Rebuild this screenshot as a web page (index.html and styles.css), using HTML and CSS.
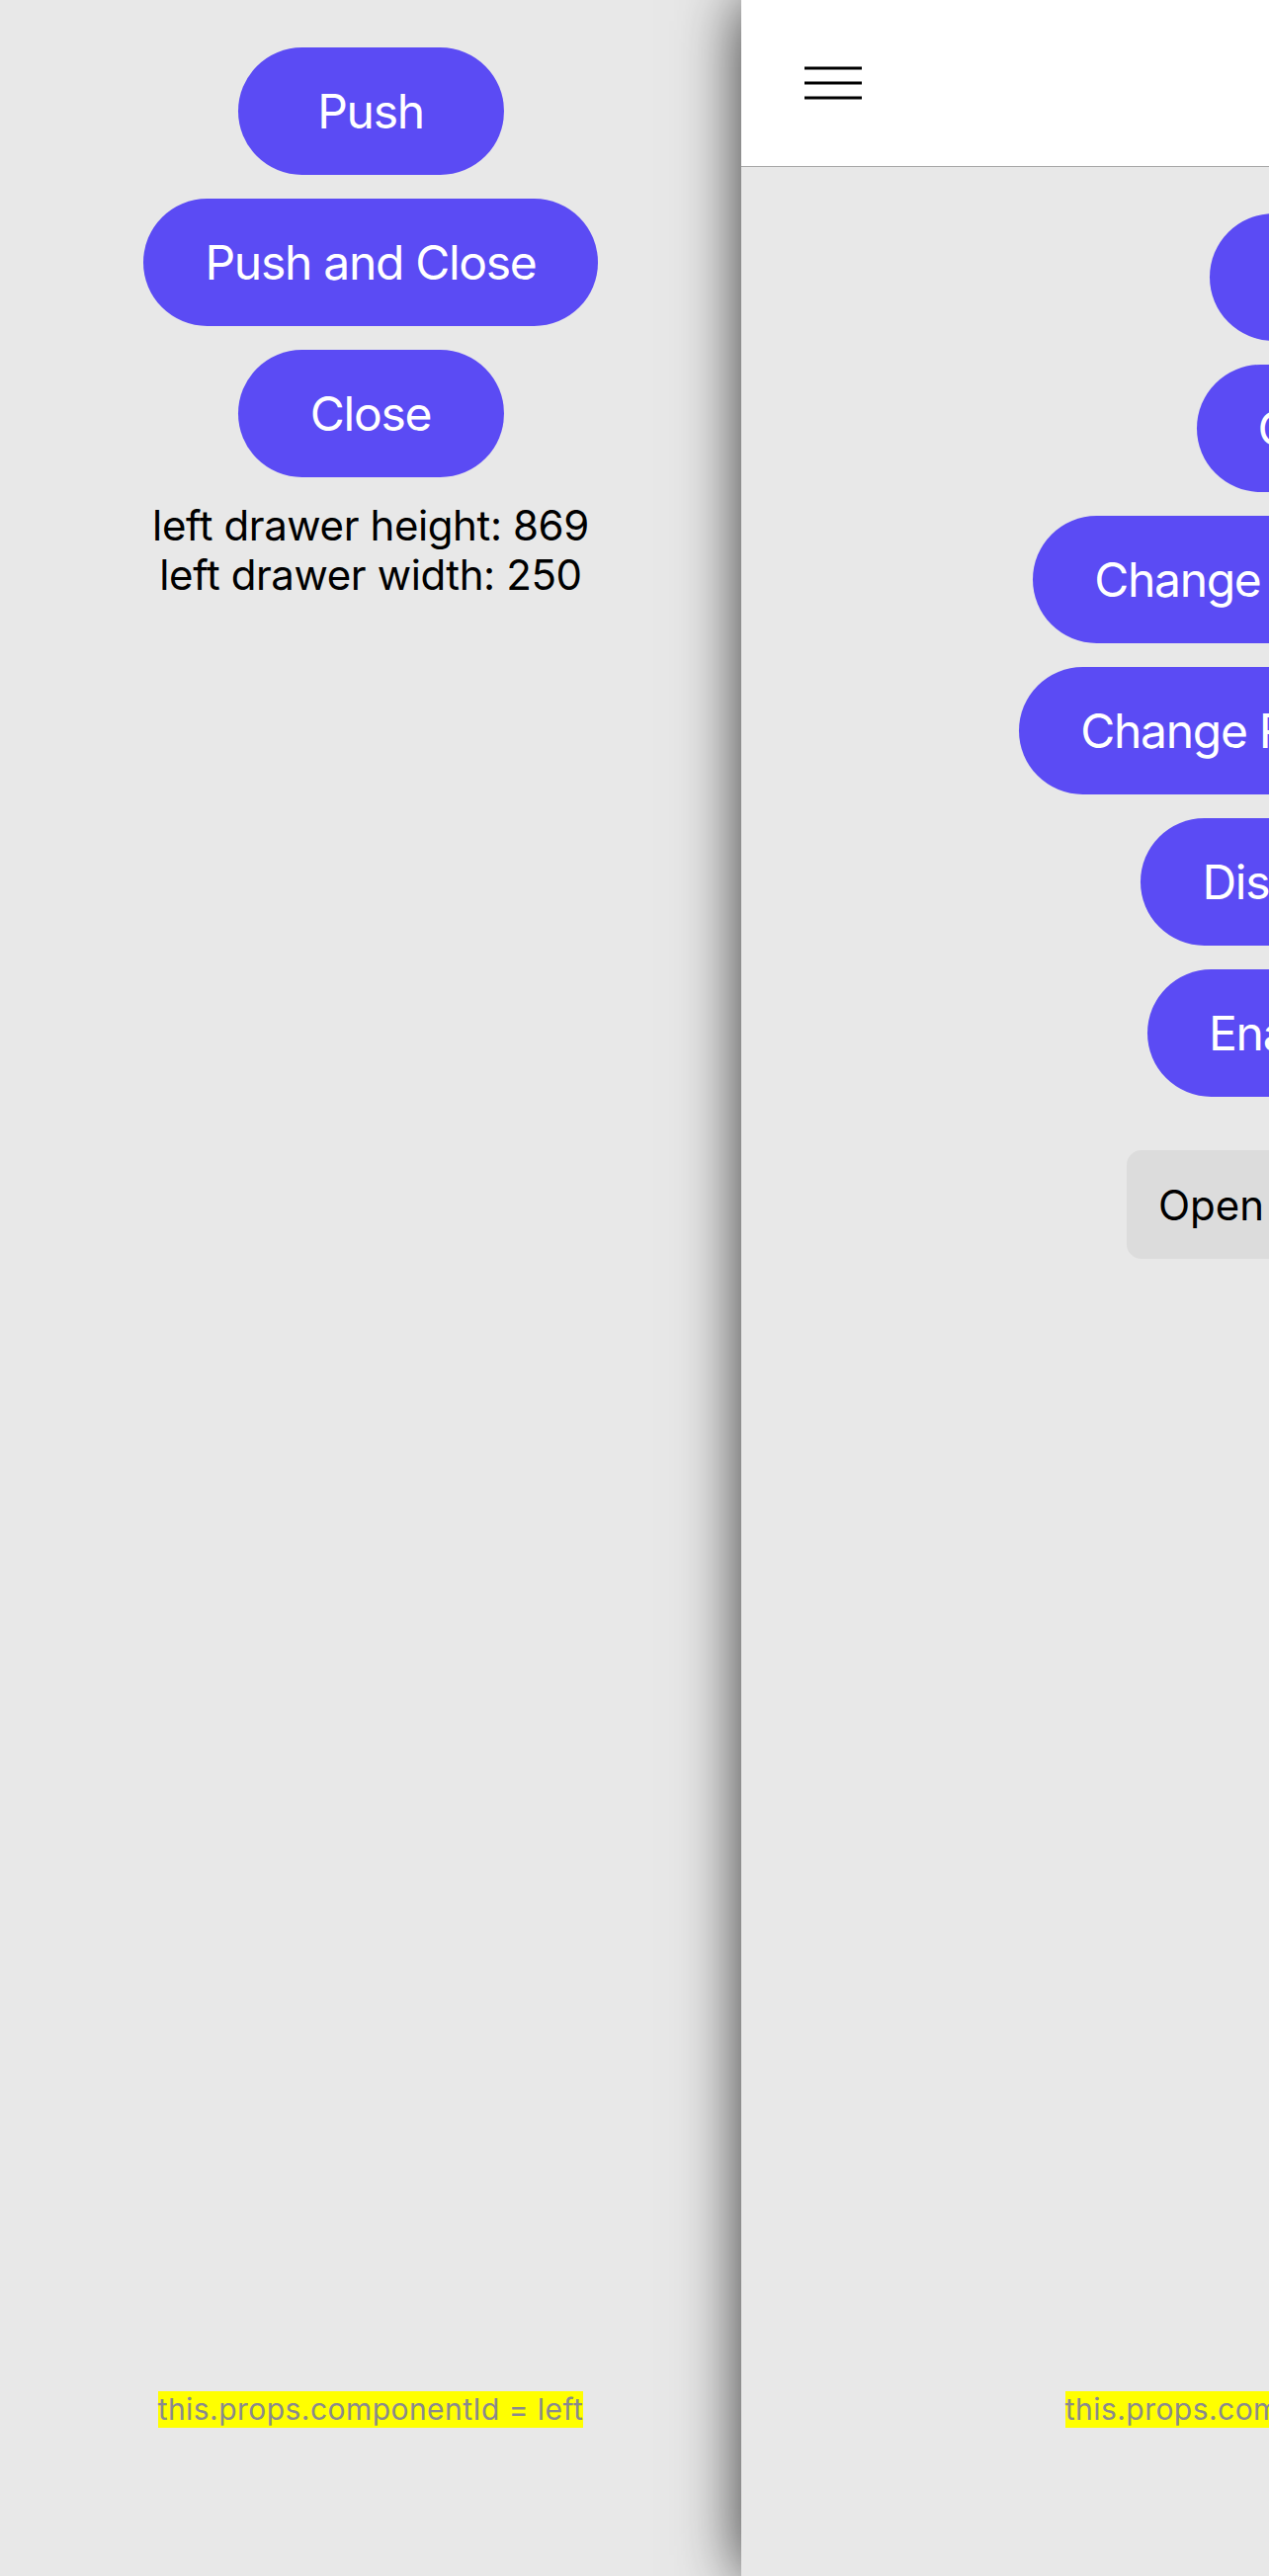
FILE: index.html
```html
<!DOCTYPE html>
<html lang="en">
<head>
<meta charset="utf-8">
<title>Side Menu</title>
<link rel="stylesheet" href="styles.css">
</head>
<body>
<div class="app">
  <aside class="drawer">
    <div class="stack">
      <button class="btn">Push</button>
      <button class="btn">Push and Close</button>
      <button class="btn">Close</button>
    </div>
    <div class="info">
      <div>left drawer height: 869</div>
      <div>left drawer width: 250</div>
    </div>
    <div class="footer"><span class="cid">this.props.componentId = left</span></div>
  </aside>
  <main class="center">
    <header class="topbar">
      <svg class="menu-icon" width="58" height="34" viewBox="0 0 58 34" aria-hidden="true">
        <path d="M0 2H58M0 17H58M0 32H58" stroke="#000" stroke-width="3" fill="none"/>
      </svg>
    </header>
    <section class="content">
      <div class="stack">
        <button class="btn">Open Left</button>
        <button class="btn">Open Right</button>
        <button class="btn">Change Left Drawer Width</button>
        <button class="btn">Change Right Drawer Width</button>
        <button class="btn">Disable Drawers</button>
        <button class="btn">Enable Drawers</button>
      </div>
      <button class="plain-btn">Open Overlay Screen</button>
      <div class="footer"><span class="cid">this.props.componentId = SideMenuCenter</span></div>
    </section>
  </main>
</div>
</body>
</html>
```

FILE: styles.css
```css
* { box-sizing: border-box; }

html, body {
  margin: 0;
  padding: 0;
  background: #e8e8e8;
}

body {
  font-family: Inter, "Noto Sans", "DejaVu Sans", sans-serif;
  color: #000;
}

.app {
  display: flex;
  width: 1284px;
  height: 2607px;
  overflow: hidden;
}

.drawer {
  flex: 0 0 750px;
  display: flex;
  flex-direction: column;
  align-items: center;
  padding-top: 48px;
  background: #e8e8e8;
}

.stack {
  display: flex;
  flex-direction: column;
  align-items: center;
  gap: 24px;
}

.btn {
  height: 129px;
  min-width: 269px;
  padding: 0 62px;
  border: none;
  border-radius: 65px;
  background: #5b4bf4;
  color: #fff;
  font-family: Inter, "Noto Sans", sans-serif;
  font-size: 48px;
  letter-spacing: -1.3px;
  white-space: nowrap;
  display: flex;
  align-items: center;
  justify-content: center;
}

.info {
  margin-top: 24px;
  font-size: 42px;
  line-height: 50px;
  letter-spacing: -0.4px;
  text-align: center;
}

.footer {
  margin-top: auto;
  margin-bottom: 150px;
  text-align: center;
  white-space: nowrap;
}

.cid {
  display: inline-block;
  background: #ffff00;
  color: #8a8a8e;
  font-size: 30px;
  letter-spacing: 0.45px;
  line-height: 37px;
}

.center {
  flex: 0 0 1284px;
  position: relative;
  z-index: 1;
  display: flex;
  flex-direction: column;
  background: #e8e8e8;
  box-shadow: 0 0 60px rgba(0, 0, 0, 0.78);
}

.topbar {
  height: 169px;
  flex: 0 0 169px;
  display: flex;
  align-items: center;
  padding-left: 64px;
  background: #fff;
  border-bottom: 1px solid #a8a8a8;
}

.menu-icon {
  display: block;
}

.content {
  flex: 1;
  display: flex;
  flex-direction: column;
  align-items: center;
  padding-top: 47px;
}

.plain-btn {
  margin-top: 54px;
  width: 504px;
  height: 110px;
  padding: 0 32px;
  border: none;
  border-radius: 15px;
  background: #dcdcdc;
  color: #000;
  font-family: Inter, "Noto Sans", sans-serif;
  font-size: 42px;
  text-align: left;
  white-space: nowrap;
}
```
